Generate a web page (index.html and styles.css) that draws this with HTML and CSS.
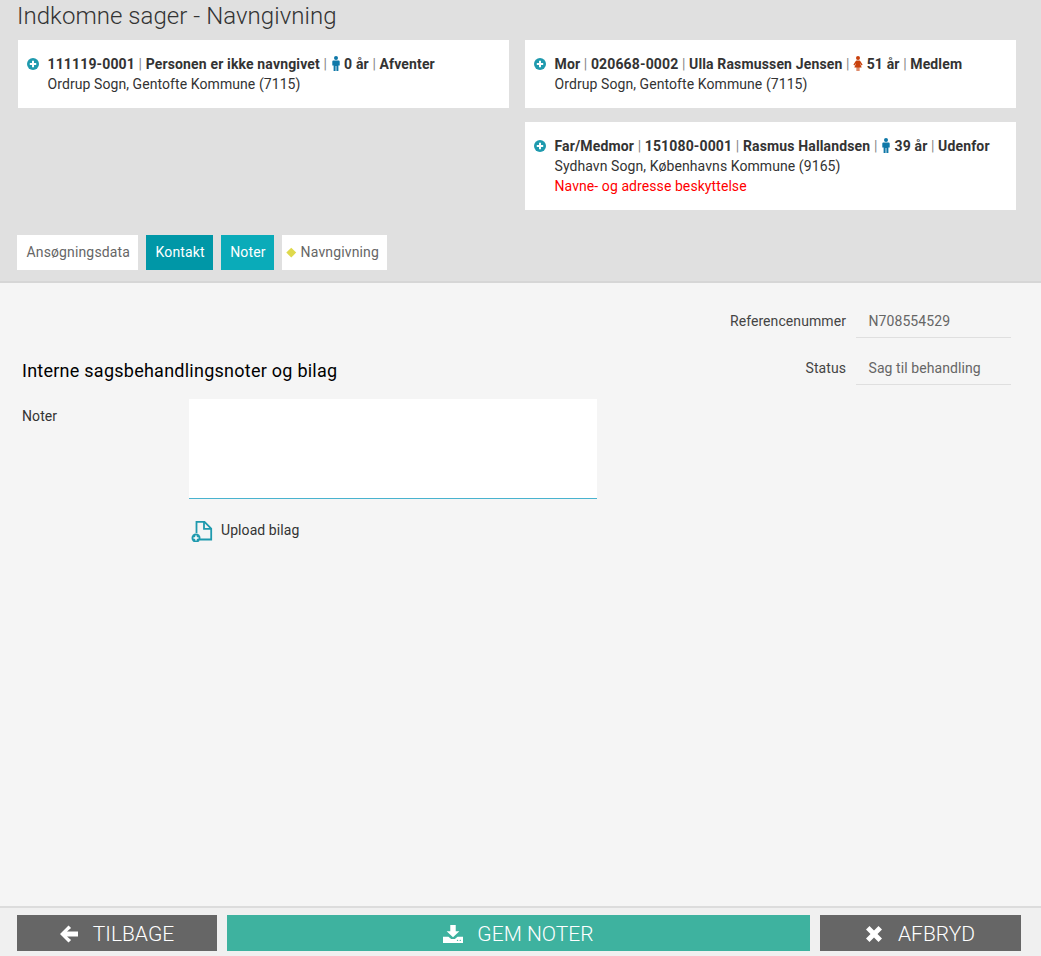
FILE: index.html
```html
<!DOCTYPE html>
<html lang="da">
<head>
<meta charset="utf-8">
<title>Indkomne sager - Navngivning</title>
<link rel="stylesheet" href="styles.css">
</head>
<body>
<svg class="defs" width="0" height="0" aria-hidden="true">
  <symbol id="plus" viewBox="0 0 12 12"><circle cx="6" cy="6" r="6" fill="#1f9aae"/><path d="M6 2.800v6.400M2.800 6h6.400" stroke="#fff" stroke-width="2"/></symbol>
  <symbol id="male" viewBox="0 0 10 15"><circle cx="5" cy="2" r="2"/><path d="M2.600 4.400h4.800c.8 0 1.300.5 1.300 1.300v3.900H7.400V15H5.400v-5H4.600v5H2.600V9.600H1.300V5.700c0-.8.500-1.300 1.300-1.300z"/></symbol>
  <symbol id="female" viewBox="0 0 10 15"><circle cx="5" cy="2" r="2"/><path d="M3.400 4.400h3.200l1 1 2 3.300-1 .7-1.800-2.300 1.900 4.300H6.400V15H5.400v-3.600h-.8V15h-1v-3.600H1.300l1.900-4.300-1.800 2.300-1-.7 2-3.300z"/></symbol>
</svg>
<header class="top">
  <h1 class="title">Indkomne sager - Navngivning</h1>
  <div class="cards">
    <div class="card-col">
      <section class="card">
        <svg class="plus"><use href="#plus"/></svg>
        <div class="card-body">
          <p class="line"><b>111119-0001</b> <i>|</i> <b>Personen er ikke navngivet</b> <i>|</i> <svg class="person male"><use href="#male"/></svg> <b>0 år</b> <i>|</i> <b>Afventer</b></p>
          <p class="line">Ordrup Sogn, Gentofte Kommune (7115)</p>
        </div>
      </section>
    </div>
    <div class="card-col">
      <section class="card">
        <svg class="plus"><use href="#plus"/></svg>
        <div class="card-body">
          <p class="line"><b>Mor</b> <i>|</i> <b>020668-0002</b> <i>|</i> <b>Ulla Rasmussen Jensen</b> <i>|</i> <svg class="person female"><use href="#female"/></svg> <b>51 år</b> <i>|</i> <b>Medlem</b></p>
          <p class="line">Ordrup Sogn, Gentofte Kommune (7115)</p>
        </div>
      </section>
      <section class="card">
        <svg class="plus"><use href="#plus"/></svg>
        <div class="card-body">
          <p class="line"><b>Far/Medmor</b> <i>|</i> <b>151080-0001</b> <i>|</i> <b>Rasmus Hallandsen</b> <i>|</i> <svg class="person male"><use href="#male"/></svg> <b>39 år</b> <i>|</i> <b>Udenfor</b></p>
          <p class="line">Sydhavn Sogn, Københavns Kommune (9165)</p>
          <p class="line warn">Navne- og adresse beskyttelse</p>
        </div>
      </section>
    </div>
  </div>
  <nav class="tabs">
    <a class="tab">Ansøgningsdata</a>
    <a class="tab tab-dark">Kontakt</a>
    <a class="tab tab-light">Noter</a>
    <a class="tab tab-mark"><span class="diamond"></span>Navngivning</a>
  </nav>
</header>
<main class="content">
  <div class="head-row">
    <h2 class="heading">Interne sagsbehandlingsnoter og bilag</h2>
    <dl class="fields">
      <div class="field"><dt>Referencenummer</dt><dd>N708554529</dd></div>
      <div class="field"><dt>Status</dt><dd>Sag til behandling</dd></div>
    </dl>
  </div>
  <div class="note-row">
    <label class="note-label" for="noter">Noter</label>
    <div class="note-col">
      <textarea class="note-input" id="noter"></textarea>
      <a class="upload">
        <svg class="upload-icon" viewBox="0 0 22 24" fill="none"><path d="M5.500 15V3.800h8l6.700 6.700v11H9" stroke="#1f9aae" stroke-width="1.800"/><path d="M13 3.800v7h7" stroke="#1f9aae" stroke-width="1.800"/><circle cx="5" cy="20" r="4.500" fill="#1f9aae"/><path d="M5 17.500v5M2.500 20h5" stroke="#fff" stroke-width="1.500"/></svg>
        Upload bilag
      </a>
    </div>
  </div>
</main>
<footer class="bottom">
  <button class="btn btn-grey btn-back">
    <svg class="btn-icon" viewBox="0 0 20 20" fill="#fff"><path d="M9.500 1.500 1 10l8.500 8.500 2.600-2.600L8 12.500h11v-5H8l4.100-3.400z"/></svg>TILBAGE
  </button>
  <button class="btn btn-green">
    <svg class="btn-icon" viewBox="0 0 22 20" fill="#fff"><path d="M8 0h6v7h4l-7 6.500L4 7h4z"/><path d="M0 13h6l3 2.500h4l3-2.500h6v7H0z"/><circle class="tray-dot" cx="16" cy="17" r=".8"/><circle class="tray-dot" cx="19" cy="17" r=".8"/></svg>GEM NOTER
  </button>
  <button class="btn btn-grey btn-cancel">
    <svg class="btn-icon" viewBox="0 0 20 20" fill="#fff"><path d="M5.500 2 10 6.500 14.500 2 18 5.500 13.500 10l4.500 4.500-3.500 3.500L10 13.500 5.500 18 2 14.500 6.500 10 2 5.500z"/></svg>AFBRYD
  </button>
</footer>
</body>
</html>
```
FILE: styles.css
```css
* { box-sizing: border-box; }
html, body { height: 100%; }
body {
  margin: 0;
  height: 956px;
  overflow: hidden;
  display: flex;
  flex-direction: column;
  font-family: Roboto, "Liberation Sans", sans-serif;
  font-size: 14px;
  line-height: 20px;
  letter-spacing: 0.08px;
  color: #333;
  background: #f5f5f5;
}
.defs { position: absolute; }

.top {
  height: 283px;
  flex: none;
  background: #e0e0e0;
  border-bottom: 2px solid #d6d6d6;
  padding: 0 17px;
}
.title {
  margin: 0;
  height: 40px;
  padding-top: 1px;
  font-weight: 300;
  font-size: 24px;
  line-height: 30px;
  letter-spacing: 0.05px;
  color: #333;
}
.cards {
  display: flex;
  gap: 16px;
  padding: 0 8px 0 1px;
  height: 195px;
}
.card-col {
  flex: 1;
  display: flex;
  flex-direction: column;
  gap: 14px;
}
.card {
  background: #fff;
  display: flex;
  gap: 8.500px;
  padding: 14px 9px;
}
.plus { width: 12px; height: 12px; flex: none; margin-top: 4px; }
.line { margin: 0; white-space: nowrap; }
.line b { font-weight: 700; color: #333; letter-spacing: 0.15px; }
.line i { font-style: normal; color: #888; }
.warn { color: #f00; }
.person { width: 10px; height: 15px; vertical-align: -2px; }
.male { fill: #0f78a8; }
.female { fill: #c8400c; }

.tabs { display: flex; gap: 8px; }
.tab {
  height: 35px;
  line-height: 35px;
  padding: 0 8px 0 9.500px;
  background: #fff;
  color: #666;
  letter-spacing: 0.14px;
}
.tab-dark { background: #0097a7; color: #fff; }
.tab-light { background: #0aabb9; color: #fff; }
.tab-mark { padding: 0 8.500px 0 6.500px; display: flex; align-items: center; gap: 6px; }
.diamond { width: 6.500px; height: 6.500px; background: #dfd94c; transform: rotate(45deg); }

.content { flex: 1; padding: 22px 30px 0 22px; }
.head-row { display: flex; justify-content: space-between; align-items: flex-end; }
.heading {
  margin: 0 0 2px;
  font-weight: 400;
  font-size: 18px;
  line-height: 24px;
  letter-spacing: 0.25px;
  color: #000;
}
.fields { margin: 0; display: flex; flex-direction: column; gap: 14px; }
.field { display: flex; gap: 10px; }
.field dt { width: 165px; text-align: right; line-height: 32px; color: #444; }
.field dd {
  margin: 0;
  width: 155px;
  height: 33px;
  padding-left: 12.500px;
  line-height: 32px;
  color: #666;
  border-bottom: 1px solid #dfdfdf;
}

.note-row { display: flex; margin-top: 14px; }
.note-label { width: 167px; flex: none; padding-top: 7px; color: #333; }
.note-input {
  display: block;
  width: 408px;
  height: 100px;
  border: 0;
  border-bottom: 1px solid #49b3cf;
  background: #fff;
  padding: 8px;
  resize: none;
  outline: none;
}
.upload { display: flex; align-items: center; gap: 8px; margin-top: 19px; color: #333; padding-left: 2px; }
.upload-icon { width: 22px; height: 24px; }

.bottom {
  flex: none;
  height: 50px;
  background: #f0f0f0;
  border-top: 2px solid #dcdcdc;
  padding: 7px 20px 5px 17px;
  display: flex;
  gap: 10px;
}
.btn {
  border: 0;
  height: 36px;
  padding: 1px 0 0;
  display: flex;
  align-items: center;
  justify-content: center;
  font-family: Roboto, "Liberation Sans", sans-serif;
  font-weight: 300;
  font-size: 21px;
  color: #fff;
}
.btn-grey { background: #666; }
.btn-green { background: #3eb29f; flex: 1; }
.btn-back { width: 200px; flex: none; padding-right: 1px; }
.btn-cancel { width: 201px; flex: none; padding-right: 2px; }
.btn-icon { width: 20px; height: 20px; margin-right: 14px; }
.tray-dot { fill: #3eb29f; }
```
